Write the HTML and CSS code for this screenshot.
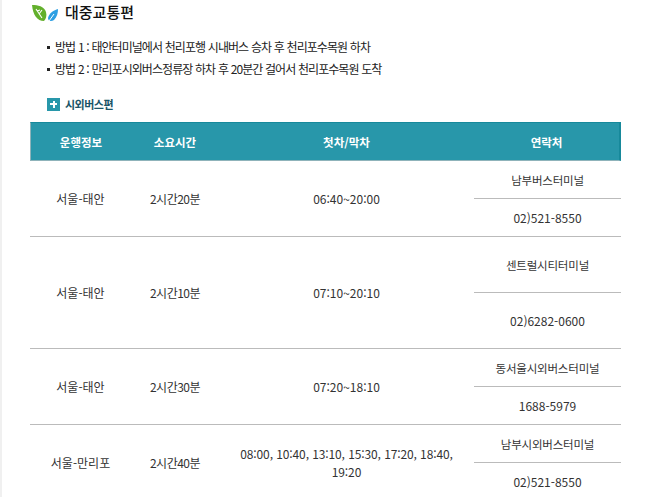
FILE: index.html
```html
<!DOCTYPE html>
<html lang="ko">
<head>
<meta charset="utf-8">
<title>대중교통편</title>
<link rel="stylesheet" href="styles.css">
</head>
<body>
<div class="page">
  <h2 class="title">
    <svg class="leaf" width="27" height="17" viewBox="0 0 27 17">
      <path d="M0 0 C6 0 12 1 14 7 C15 11 14 14 12 16 C5 16 1 10 0 0Z" fill="#63b02c"/>
      <path d="M4 4 L10 13 M7 9 L10 5 M5 6 L8 5" stroke="#fff" stroke-width="1.1" fill="none"/>
      <path d="M26 4 C22 5 17 8 16 13 C16 16 19 17 22 15 C25 12 26 8 26 4Z" fill="#2d9fe3"/>
      <path d="M17 16 L22 9" stroke="#fff" stroke-width="1" fill="none"/>
    </svg>
    <span>대중교통편</span>
  </h2>
  <ul class="methods">
    <li>방법 1 : 태안터미널에서 천리포행 시내버스 승차 후 천리포수목원 하차</li>
    <li>방법 2 : 만리포시외버스정류장 하차 후 20분간 걸어서 천리포수목원 도착</li>
  </ul>
  <h3 class="sub"><span class="plus"></span>시외버스편</h3>
  <table class="bus">
    <colgroup><col class="c1"><col class="c2"><col class="c3"><col class="c4"></colgroup>
    <thead>
      <tr><th>운행정보</th><th>소요시간</th><th>첫차/막차</th><th>연락처</th></tr>
    </thead>
    <tbody>
      <tr class="r1"><td rowspan="2" class="end">서울-태안</td><td rowspan="2" class="end dur">2시간20분</td><td rowspan="2" class="end">06:40~20:00</td><td class="name">남부버스터미널</td></tr>
      <tr class="r1"><td class="end">02)521-8550</td></tr>
      <tr class="r2"><td rowspan="2" class="end">서울-태안</td><td rowspan="2" class="end dur">2시간10분</td><td rowspan="2" class="end">07:10~20:10</td><td class="name">센트럴시티터미널</td></tr>
      <tr class="r2"><td class="end">02)6282-0600</td></tr>
      <tr class="r1"><td rowspan="2" class="end">서울-태안</td><td rowspan="2" class="end dur">2시간30분</td><td rowspan="2" class="end">07:20~18:10</td><td class="name">동서울시외버스터미널</td></tr>
      <tr class="r1"><td class="end">1688-5979</td></tr>
      <tr class="r1"><td rowspan="2" class="end">서울-만리포</td><td rowspan="2" class="end dur">2시간40분</td><td rowspan="2" class="end wide">08:00, 10:40, 13:10, 15:30, 17:20, 18:40, 19:20</td><td class="name">남부시외버스터미널</td></tr>
      <tr class="r1"><td class="end">02)521-8550</td></tr>
    </tbody>
  </table>
</div>
</body>
</html>
```
FILE: styles.css
```css
html, body {
  margin: 0;
  padding: 0;
  background: #fff;
  height: 497px;
  overflow: hidden;
}
body {
  font-family: "Noto Sans CJK KR", "Noto Sans", sans-serif;
  color: #222;
  border-left: 2px solid #f0f0f0;
}
.page {
  padding: 0 0 0 28px;
  width: 591px;
}
.title {
  display: flex;
  align-items: center;
  margin: 0;
  height: 24px;
  line-height: 22px;
  font-size: 15px;
  font-weight: 500;
  color: #111;
}
.leaf {
  flex: none;
  margin-left: 2px;
  margin-right: 6px;
  margin-top: 3px;
}
.methods {
  list-style: none;
  margin: 12px 0 0;
  padding: 0 0 0 15px;
  font-size: 12px;
}
.methods li {
  height: 22px;
  line-height: 22px;
  position: relative;
  padding-left: 10px;
  letter-spacing: -0.95px;
  word-spacing: 0.3px;
}
.methods li::before {
  content: "";
  position: absolute;
  left: 2px;
  top: 10px;
  width: 3px;
  height: 3px;
  background: #222;
}
.sub {
  display: flex;
  align-items: center;
  margin: 16px 0 0 17px;
  height: 16px;
  font-size: 11px;
  font-weight: 600;
  letter-spacing: -0.5px;
  color: #1a5568;
}
.plus {
  width: 13px;
  height: 13px;
  margin-right: 5px;
  background:
    linear-gradient(#fff, #fff) center / 7px 2px no-repeat,
    linear-gradient(#fff, #fff) center / 2px 7px no-repeat,
    #2897aa;
}
.bus {
  border-collapse: separate;
  border-spacing: 0;
  table-layout: fixed;
  width: 591px;
  margin-top: 10px;
  font-size: 12px;
  text-align: center;
}
.c1 { width: 101px; }
.c2 { width: 88px; }
.c3 { width: 255px; }
.c4 { width: 147px; }
th {
  height: 37px;
  padding: 0;
  background: #2897aa;
  color: #fff;
  font-size: 11.5px;
  font-weight: 600;
  border-top: 1px solid #17899b;
  border-bottom: 1px solid #8fb3ba;
}
th:first-child { border-left: 1px solid #8fb3ba; }
th:last-child { border-right: 2px solid #17899b; }
td {
  padding: 0;
  color: #333;
}
.r1 td { height: 37px; }
.r2 td { height: 55px; }
.end { border-bottom: 1px solid #bbb; }
.dur { letter-spacing: -0.5px; }
.name { border-bottom: 1px solid #bbb; font-size: 11.5px; letter-spacing: -0.2px; }
.wide { padding: 0 15px; line-height: 18px; letter-spacing: -0.1px; }
```
